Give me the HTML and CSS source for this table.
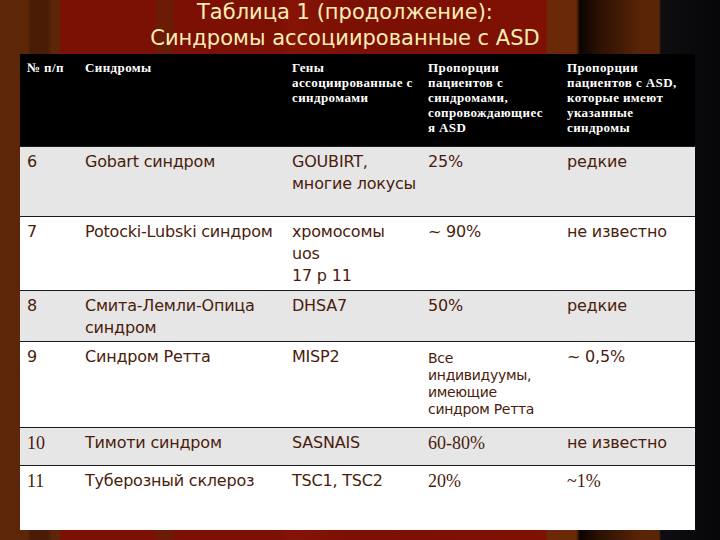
FILE: index.html
```html
<!DOCTYPE html>
<html lang="ru">
<head>
<meta charset="utf-8">
<title>Таблица 1 (продолжение)</title>
<link rel="stylesheet" href="styles.css">
</head>
<body>
<div class="slide">
  <div class="title">
    <div class="t1">Таблица 1 (продолжение):</div>
    <div class="t2">Синдромы ассоциированные с ASD</div>
  </div>
  <table class="grid">
    <colgroup>
      <col class="c1"><col class="c2"><col class="c3"><col class="c4"><col class="c5">
    </colgroup>
    <thead>
      <tr class="head">
        <th>№ п/п</th>
        <th>Синдромы</th>
        <th>Гены ассоциированные с синдромами</th>
        <th class="narrow">Пропорции пациентов с синдромами, сопровождающиес я ASD</th>
        <th>Пропорции пациентов с ASD, которые имеют указанные синдромы</th>
      </tr>
    </thead>
    <tbody>
      <tr class="r6 alt">
        <td>6</td><td>Gobart синдром</td><td>GOUBIRT,<br>многие локусы</td><td>25%</td><td>редкие</td>
      </tr>
      <tr class="r7">
        <td>7</td><td>Potocki-Lubski синдром</td><td>хромосомы<br>uos<br>17 p 11</td><td>~ 90%</td><td>не известно</td>
      </tr>
      <tr class="r8 alt">
        <td>8</td><td>Смита-Лемли-Опица синдром</td><td>DHSA7</td><td>50%</td><td>редкие</td>
      </tr>
      <tr class="r9">
        <td>9</td><td>Синдром Ретта</td><td>MISP2</td><td class="small">Все индивидуумы, имеющие синдром Ретта</td><td>~ 0,5%</td>
      </tr>
      <tr class="r10 alt">
        <td class="serif">10</td><td>Тимоти синдром</td><td>SASNAIS</td><td class="serif">60-80%</td><td>не известно</td>
      </tr>
      <tr class="r11">
        <td class="serif">11</td><td>Туберозный склероз</td><td>TSC1, TSC2</td><td class="serif">20%</td><td class="serif">~1%</td>
      </tr>
    </tbody>
  </table>
</div>
</body>
</html>
```

FILE: styles.css
```css
html, body {
  margin: 0;
  padding: 0;
  background: #000;
}

.slide {
  width: 720px;
  height: 540px;
  overflow: hidden;
  background:
    linear-gradient(90deg,
      #5e2608 0px, #5e2608 28px,
      #4a1c06 30px, #4a1c06 48px,
      #5e2608 52px, #5e2608 60px,
      #7b1005 60px, #7b1005 155px,
      #6a1c06 158px, #6a1c06 172px,
      #7d1004 175px, #7d1004 280px,
      #861406 290px, #7d1004 345px,
      #7e1004 546px,
      #6a2a08 547px, #6a2a08 576px,
      #0a0404 580px, #2a1004 598px,
      #5a2406 640px, #5a2608 659px,
      #0e0e12 661px, #060608 720px);
}

.title {
  height: 54px;
  padding-right: 30px;
  text-align: center;
  color: #fbedb4;
  font-family: "DejaVu Sans", sans-serif;
  font-size: 21px;
}

.t1 {
  line-height: 24px;
}

.t2 {
  line-height: 28px;
}

.grid {
  margin-left: 20px;
  width: 675px;
  border-collapse: collapse;
  table-layout: fixed;
}

.c1 { width: 58px; }
.c2 { width: 207px; }
.c3 { width: 136px; }
.c4 { width: 139px; }
.c5 { width: 135px; }

.head {
  height: 92px;
  background: #000;
}

.head th {
  vertical-align: top;
  text-align: left;
  font-weight: bold;
  color: #fff;
  font-family: "Liberation Serif", "DejaVu Serif", serif;
  font-size: 13px;
  line-height: 15px;
  letter-spacing: 0.4px;
  padding: 6px 3px 0 7px;
}

.head th.narrow {
  padding-right: 12px;
}

tbody td {
  vertical-align: top;
  text-align: left;
  color: #4a1c0c;
  font-family: "DejaVu Sans", "Liberation Sans", sans-serif;
  font-size: 16px;
  line-height: 22px;
  letter-spacing: -0.2px;
  padding: 4px 4px 0 7px;
  border-top: 1px solid #1a1a1a;
}

tbody tr { background: #fff; }
tbody tr.alt { background: #e6e6e6; }

.r6 { height: 70px; }
.r7 { height: 74px; }
.r8 { height: 51px; }
.r9 { height: 86px; }
.r10 { height: 38px; }
.r11 { height: 65px; }

tbody td.small {
  font-size: 14px;
  line-height: 17px;
  letter-spacing: -0.3px;
  padding-top: 8px;
}

tbody td.serif {
  font-family: "Liberation Serif", "DejaVu Serif", serif;
  font-size: 18px;
  letter-spacing: 0;
}
```
